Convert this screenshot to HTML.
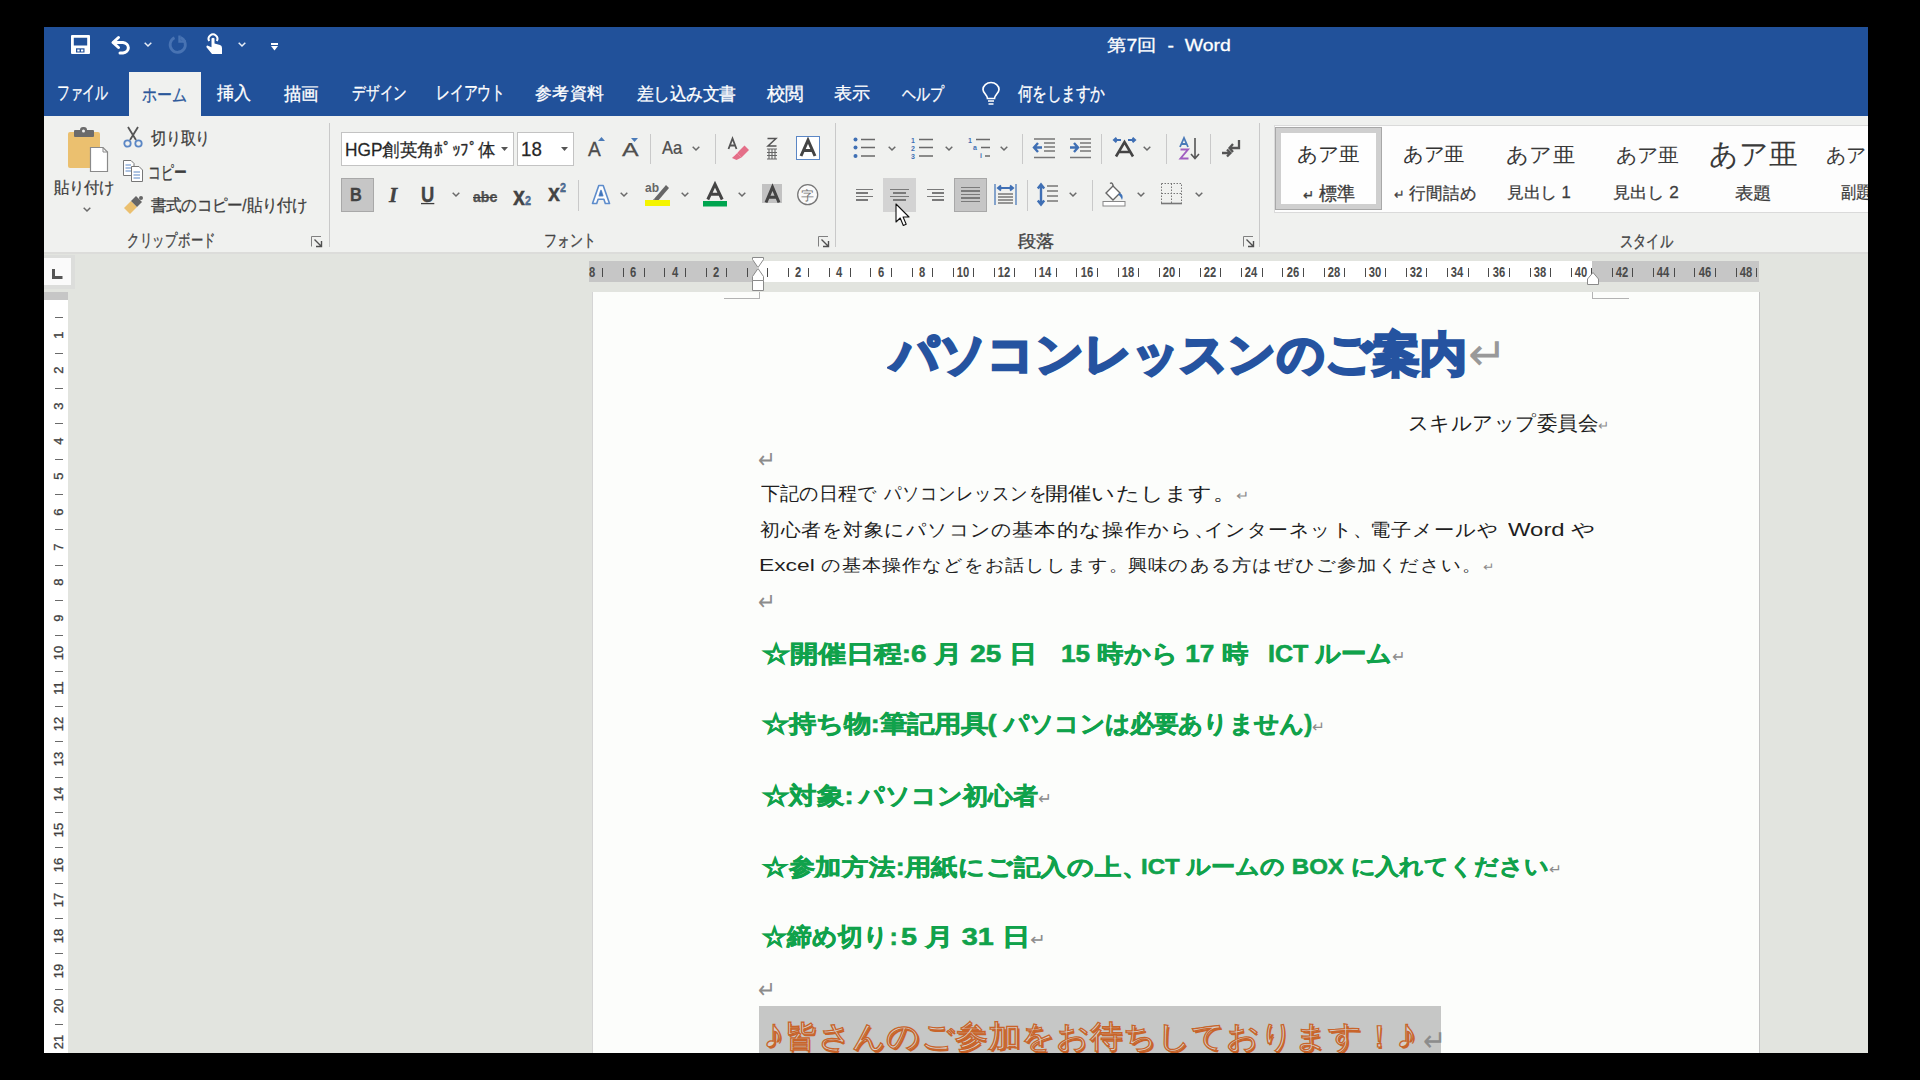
<!DOCTYPE html>
<html><head><meta charset="utf-8"><title>Word</title>
<style>
*{margin:0;padding:0;box-sizing:border-box}
html,body{width:1920px;height:1080px;overflow:hidden;background:#000;font-family:"Liberation Sans",sans-serif;position:relative}
.a{position:absolute}
svg{position:absolute;overflow:visible}
.t{position:absolute;white-space:nowrap;transform-origin:0 0;line-height:1.25}
.sep{position:absolute;width:1px;background:#c9c9c9}
.chev{position:absolute;width:5px;height:5px;border-right:1.5px solid #6a6a6a;border-bottom:1.5px solid #6a6a6a;transform:rotate(45deg)}
.rl{position:absolute;top:265px;font-size:14px;font-weight:bold;color:#4a4a4a;line-height:14px;width:24px;text-align:center;margin-left:-12px;transform:scaleX(0.8)}
.tk{position:absolute;top:268px;width:1px;height:9px;background:#4a4a4a}
.vl{position:absolute;left:47px;font-size:13px;color:#404040;-webkit-text-stroke:0.3px #404040;line-height:14px;width:24px;height:14px;text-align:center;transform:rotate(-90deg)}
.vt{position:absolute;left:55px;width:8px;height:1px;background:#6a6a6a}
.tab{color:#fff;font-size:17px;-webkit-text-stroke:0.3px #fff}
.rt{color:#3d3d3d;font-size:15px;-webkit-text-stroke:0.25px #3d3d3d}
.gl{color:#444;font-size:15px;-webkit-text-stroke:0.3px #444}
.body{font-size:20.6px;color:#1e1e1e}
.grn{font-size:26px;color:#10a24b;font-weight:bold;-webkit-text-stroke:0.6px #10a24b}
.ret{color:#8c8c8c;font-weight:normal;-webkit-text-stroke:0}
.sty{font-family:"Liberation Serif",serif;color:#333}
.line{position:absolute;height:1.6px;background:#7a7a7a}
</style></head><body>
<div class="a" style="left:44px;top:27px;width:1824px;height:1026px;background:#e2e4df;"></div>
<div class="a" style="left:44px;top:27px;width:1824px;height:89px;background:#21519a;"></div>
<svg style="left:71px;top:35px" width="19" height="19" viewBox="0 0 19 19"><path d="M0 1Q0 0 1 0H18Q19 0 19 1V18Q19 19 18 19H1Q0 19 0 18Z M2.8 2.8V10.5H16.2V2.8Z" fill="#fff" fill-rule="evenodd"/><rect x="5" y="13.3" width="8.5" height="4.2" fill="#21519a"/><rect x="6.3" y="14.5" width="2.3" height="2" fill="#fff"/><rect x="10" y="14.5" width="2.3" height="2" fill="#fff"/></svg>
<svg style="left:111px;top:36px" width="22" height="18" viewBox="0 0 22 18"><path d="M7.5 1.5L2 6.5L7.5 11.5" fill="none" stroke="#fff" stroke-width="3" stroke-linejoin="round" stroke-linecap="round"/><path d="M3 6.5H12A6.2 5.3 0 0 1 12 17H9" fill="none" stroke="#fff" stroke-width="3" stroke-linecap="round"/></svg>
<svg style="left:144px;top:42px" width="8" height="5" viewBox="0 0 8 5"><path d="M0.7 0.7L4 4L7.3 0.7" fill="none" stroke="#e8eef7" stroke-width="1.5"/></svg>
<svg style="left:169px;top:35px" width="19" height="19" viewBox="0 0 19 19"><path d="M11.5 2.6A7.6 7.6 0 1 1 5.5 2.8" fill="none" stroke="#4873b3" stroke-width="2.8"/><path d="M10.5 0.5V6.5H17" fill="none" stroke="#4873b3" stroke-width="2.4"/></svg>
<svg style="left:206px;top:34px" width="17" height="20" viewBox="0 0 17 20"><path d="M3.2 7A4.4 4.4 0 1 1 10.8 7" fill="none" stroke="#fff" stroke-width="2"/><path d="M5.5 4.6Q7 3 8.5 4.6V9.5L14 11Q16 11.6 16 14V20H6L0.5 13.2Q0 12 1.4 11.6L5.5 13.3Z" fill="#fff"/></svg>
<svg style="left:238px;top:42px" width="8" height="5" viewBox="0 0 8 5"><path d="M0.7 0.7L4 4L7.3 0.7" fill="none" stroke="#e8eef7" stroke-width="1.5"/></svg>
<div class="a" style="left:271px;top:43px;width:7px;height:2px;background:#fff;"></div>
<svg style="left:271px;top:46px" width="7" height="5" viewBox="0 0 7 5"><path d="M0 0H7L3.5 4.5Z" fill="#fff"/></svg>
<div class="a" style="left:129px;top:72px;width:72px;height:44px;background:#f0f1ef;"></div>
<svg style="left:982px;top:82px" width="18" height="24" viewBox="0 0 18 24"><path d="M5.5 16.5C5.5 13 1 11 1 7.5A8 7 0 0 1 17 7.5C17 11 12.5 13 12.5 16.5Z" fill="none" stroke="#fff" stroke-width="1.7"/><path d="M6 19H12M6.5 22H11.5" stroke="#fff" stroke-width="1.7"/></svg>
<div class="a" style="left:44px;top:116px;width:1824px;height:137px;background:#f0f1ef;"></div>
<div class="a" style="left:44px;top:252px;width:1824px;height:2px;background:#dcdcda;"></div>
<div class="sep" style="left:329px;top:123px;height:124px"></div>
<div class="sep" style="left:835px;top:123px;height:124px"></div>
<div class="sep" style="left:1259px;top:123px;height:124px"></div>
<svg style="left:311px;top:236px" width="12" height="11" viewBox="0 0 12 11"><path d="M0.5 10.5V0.5H10" fill="none" stroke="#808080" stroke-width="1"/><path d="M3.5 3.5L10 10M10.5 5V10.5H5" fill="none" stroke="#505050" stroke-width="1.4"/></svg>
<svg style="left:818px;top:236px" width="12" height="11" viewBox="0 0 12 11"><path d="M0.5 10.5V0.5H10" fill="none" stroke="#808080" stroke-width="1"/><path d="M3.5 3.5L10 10M10.5 5V10.5H5" fill="none" stroke="#505050" stroke-width="1.4"/></svg>
<svg style="left:1243px;top:236px" width="12" height="11" viewBox="0 0 12 11"><path d="M0.5 10.5V0.5H10" fill="none" stroke="#808080" stroke-width="1"/><path d="M3.5 3.5L10 10M10.5 5V10.5H5" fill="none" stroke="#505050" stroke-width="1.4"/></svg>
<svg style="left:67px;top:126px" width="42" height="47" viewBox="0 0 42 47"><rect x="1" y="6" width="32" height="36" rx="2" fill="#ebc06f"/><rect x="7" y="4" width="20" height="7" rx="1" fill="#6b6b6b"/><rect x="13" y="1" width="7" height="6" rx="3" fill="#6b6b6b"/><circle cx="16.5" cy="5" r="1.5" fill="#f1f1f0"/><path d="M23.5 21.5H36L40.5 26V45.5H23.5Z" fill="#fff" stroke="#8a8a8a" stroke-width="1.2"/><path d="M36 21.5V26H40.5" fill="none" stroke="#8a8a8a" stroke-width="1"/></svg>
<svg style="left:83px;top:207px" width="8" height="5" viewBox="0 0 8 5"><path d="M0.7 0.7L4 4L7.3 0.7" fill="none" stroke="#6a6a6a" stroke-width="1.5"/></svg>
<svg style="left:123px;top:126px" width="20" height="22" viewBox="0 0 20 22"><path d="M5 1L13 14M15 1L7 14" stroke="#555" stroke-width="1.8"/><circle cx="4.5" cy="17.5" r="3.2" fill="none" stroke="#5b87c5" stroke-width="1.8"/><circle cx="15.5" cy="17.5" r="3.2" fill="none" stroke="#5b87c5" stroke-width="1.8"/></svg>
<svg style="left:123px;top:160px" width="21" height="22" viewBox="0 0 21 22"><path d="M0.5 0.5H8L11 3.5V15.5H0.5Z" fill="#fff" stroke="#777"/><path d="M2.5 5H8M2.5 8H8M2.5 11H8" stroke="#5b87c5"/><path d="M8.5 6.5H16L19.5 10V21.5H8.5Z" fill="#fff" stroke="#777"/><path d="M10.5 12H17M10.5 15H17M10.5 18H17" stroke="#5b87c5"/></svg>
<svg style="left:123px;top:196px" width="21" height="19" viewBox="0 0 21 19"><path d="M1 12L8 5L14 11L7 18Z" fill="#ebc06f"/><path d="M8 5L13 0L19 6L14 11Z" fill="#666"/><circle cx="18" cy="2" r="2" fill="#666"/></svg>
<div class="a" style="left:341px;top:132px;width:173px;height:34px;background:#fff;border:1px solid #c3c3c3"></div>
<svg style="left:501px;top:147px" width="7" height="4" viewBox="0 0 7 4"><path d="M0 0H7L3.5 4Z" fill="#555"/></svg>
<div class="a" style="left:517px;top:132px;width:57px;height:34px;background:#fff;border:1px solid #c3c3c3"></div>
<svg style="left:561px;top:147px" width="7" height="4" viewBox="0 0 7 4"><path d="M0 0H7L3.5 4Z" fill="#555"/></svg>
<svg style="left:598px;top:137px" width="7" height="4" viewBox="0 0 7 4"><path d="M0 4H7L3.5 0Z" fill="#4a7ab8"/></svg>
<svg style="left:631px;top:138px" width="7" height="4" viewBox="0 0 7 4"><path d="M0 0H7L3.5 4Z" fill="#4a7ab8"/></svg>
<div class="sep" style="left:650px;top:134px;height:30px"></div>
<svg style="left:692px;top:146px" width="8" height="5" viewBox="0 0 8 5"><path d="M0.7 0.7L4 4L7.3 0.7" fill="none" stroke="#6a6a6a" stroke-width="1.5"/></svg>
<div class="sep" style="left:715px;top:134px;height:30px"></div>
<svg style="left:728px;top:137px" width="22" height="24" viewBox="0 0 22 24"><path d="M0.5 12L4.5 1.5L8.5 12M2 8.5H7" fill="none" stroke="#555" stroke-width="1.8"/><path d="M9 16L16.5 8.5L21 13L13.5 20.5Z" fill="#e46f88"/><path d="M4 21L9 16L13.5 20.5L8.5 23Z" fill="#e46f88"/><path d="M5.5 19.5L10.5 14.5" stroke="#f8c9d3" stroke-width="1"/></svg>
<svg style="left:766px;top:137px" width="12" height="23" viewBox="0 0 12 23"><path d="M1.5 1.5H10L2 9H10.5" fill="none" stroke="#555" stroke-width="1.5"/><path d="M1 12H11M1 22H11M3 12V22M6 12V22M9 12V22M1 15.5H11M1 18.5H11" stroke="#666" stroke-width="1.1"/></svg>
<div class="a" style="left:796px;top:136px;width:24px;height:24px;background:#fff;border:1px solid #5b87c5"></div>
<svg style="left:800px;top:139px" width="16" height="18" viewBox="0 0 16 18"><path d="M1 17L8 1.2L15 17M3.8 11.5H12.2" fill="none" stroke="#444" stroke-width="3"/></svg>
<div class="a" style="left:341px;top:178px;width:33px;height:34px;background:#c6c6c6;border:1px solid #a8a8a8"></div>
<svg style="left:452px;top:192px" width="8" height="5" viewBox="0 0 8 5"><path d="M0.7 0.7L4 4L7.3 0.7" fill="none" stroke="#6a6a6a" stroke-width="1.5"/></svg>
<div class="sep" style="left:578px;top:180px;height:31px"></div>
<svg style="left:591px;top:184px" width="20" height="21" viewBox="0 0 20 21"><path d="M1.5 19.5L7.8 1.5H12.2L18.5 19.5H14.3L12.9 15.3H7.1L5.7 19.5Z M8.3 11.8H11.7L10 6.5Z" fill="#fdfdfd" fill-rule="evenodd" stroke="#5d8ccb" stroke-width="1.6" stroke-linejoin="round"/><path d="M8.3 11.8H11.7L10 6.5Z" fill="#3f73b9"/></svg>
<svg style="left:620px;top:192px" width="8" height="5" viewBox="0 0 8 5"><path d="M0.7 0.7L4 4L7.3 0.7" fill="none" stroke="#6a6a6a" stroke-width="1.5"/></svg>
<svg style="left:644px;top:182px" width="27" height="25" viewBox="0 0 27 25"><text x="1" y="10" font-size="12" font-family="Liberation Sans" font-weight="bold" fill="#666">ab</text><path d="M10 17L22 3L25 6L13 20Z" fill="#666"/><path d="M8 19L10 17L13 20L11 21Z" fill="#555"/><rect x="1" y="18" width="25" height="6" fill="#f4f400"/></svg>
<svg style="left:681px;top:192px" width="8" height="5" viewBox="0 0 8 5"><path d="M0.7 0.7L4 4L7.3 0.7" fill="none" stroke="#6a6a6a" stroke-width="1.5"/></svg>
<svg style="left:703px;top:183px" width="25" height="24" viewBox="0 0 25 24"><path d="M4.8 16.5L12 1.2L19.2 16.5M7.5 11.3H16.5" fill="none" stroke="#444" stroke-width="3"/><rect x="0" y="18" width="24" height="5.5" fill="#00a54f"/></svg>
<svg style="left:738px;top:192px" width="8" height="5" viewBox="0 0 8 5"><path d="M0.7 0.7L4 4L7.3 0.7" fill="none" stroke="#6a6a6a" stroke-width="1.5"/></svg>
<div class="a" style="left:762px;top:184px;width:20px;height:19px;background:#c2c2c2;"></div>
<svg style="left:765px;top:186px" width="15" height="17" viewBox="0 0 15 17"><path d="M1 16.5L7.5 1.2L14 16.5M3.5 11.3H11.5" fill="none" stroke="#444" stroke-width="3"/></svg>
<svg style="left:797px;top:184px" width="22" height="22" viewBox="0 0 22 22"><circle cx="10.7" cy="10.7" r="10" fill="#fafafa" stroke="#777" stroke-width="1.3"/><text x="10.7" y="16" font-size="13" text-anchor="middle" font-family="Liberation Sans" fill="#777">字</text></svg>
<svg style="left:853px;top:137px" width="23" height="22" viewBox="0 0 23 22"><circle cx="2.5" cy="2.5" r="2" fill="#3f6fb4"/><circle cx="2.5" cy="10.5" r="2" fill="#3f6fb4"/><circle cx="2.5" cy="19" r="2" fill="#3f6fb4"/><path d="M8 2.5H22M8 10.5H22M8 19H22" stroke="#6a6a6a" stroke-width="1.6"/></svg>
<svg style="left:888px;top:146px" width="8" height="5" viewBox="0 0 8 5"><path d="M0.7 0.7L4 4L7.3 0.7" fill="none" stroke="#6a6a6a" stroke-width="1.5"/></svg>
<svg style="left:911px;top:137px" width="23" height="22" viewBox="0 0 23 22"><text x="0" y="6" font-size="7" font-family="Liberation Sans" font-weight="bold" fill="#3f6fb4">1</text><text x="0" y="14" font-size="7" font-family="Liberation Sans" font-weight="bold" fill="#3f6fb4">2</text><text x="0" y="22" font-size="7" font-family="Liberation Sans" font-weight="bold" fill="#3f6fb4">3</text><path d="M8 2.5H22M8 10.5H22M8 19H22" stroke="#6a6a6a" stroke-width="1.6"/></svg>
<svg style="left:945px;top:146px" width="8" height="5" viewBox="0 0 8 5"><path d="M0.7 0.7L4 4L7.3 0.7" fill="none" stroke="#6a6a6a" stroke-width="1.5"/></svg>
<svg style="left:968px;top:137px" width="23" height="22" viewBox="0 0 23 22"><text x="0" y="6" font-size="7" font-family="Liberation Sans" font-weight="bold" fill="#3f6fb4">1</text><text x="5" y="13" font-size="7" font-family="Liberation Sans" font-weight="bold" fill="#3f6fb4">a</text><text x="12" y="21" font-size="7" font-family="Liberation Sans" font-weight="bold" fill="#3f6fb4">i</text><path d="M8 2.5H22M13 10.5H22M17 19H22" stroke="#6a6a6a" stroke-width="1.6"/></svg>
<svg style="left:1000px;top:146px" width="8" height="5" viewBox="0 0 8 5"><path d="M0.7 0.7L4 4L7.3 0.7" fill="none" stroke="#6a6a6a" stroke-width="1.5"/></svg>
<div class="sep" style="left:1022px;top:134px;height:30px"></div>
<svg style="left:1033px;top:138px" width="23" height="21" viewBox="0 0 23 21"><path d="M1 1H22M11 5H22M11 9H22M11 13H22M1 19.5H22" stroke="#777" stroke-width="1.6"/><path d="M1 9.5H9M5 5L1 9.5L5 14" fill="none" stroke="#3f6fb4" stroke-width="2.4"/></svg>
<svg style="left:1069px;top:138px" width="23" height="21" viewBox="0 0 23 21"><path d="M1 1H22M11 5H22M11 9H22M11 13H22M1 19.5H22" stroke="#777" stroke-width="1.6"/><path d="M1 9.5H9M5 5L9 9.5L5 14" fill="none" stroke="#3f6fb4" stroke-width="2.4"/></svg>
<div class="sep" style="left:1101px;top:134px;height:30px"></div>
<svg style="left:1113px;top:137px" width="23" height="20" viewBox="0 0 23 20"><path d="M3 19.5L11.5 5L20 19.5M6 15H17" fill="none" stroke="#444" stroke-width="2.6"/><path d="M1 3H8M3.5 0.8L1 3L3.5 5.2M15 3H22M19.5 0.8L22 3L19.5 5.2" fill="none" stroke="#3f6fb4" stroke-width="2"/></svg>
<svg style="left:1143px;top:146px" width="8" height="5" viewBox="0 0 8 5"><path d="M0.7 0.7L4 4L7.3 0.7" fill="none" stroke="#6a6a6a" stroke-width="1.5"/></svg>
<div class="sep" style="left:1166px;top:134px;height:30px"></div>
<svg style="left:1179px;top:137px" width="21" height="23" viewBox="0 0 21 23"><path d="M1 10L5 1L9 10M2.5 7H7.5" fill="none" stroke="#4a7ab8" stroke-width="1.8"/><path d="M1.5 12.5H9L1.5 21.5H9.5" fill="none" stroke="#a05ec0" stroke-width="1.9"/><path d="M16 1V21M12 17L16 21.5L20 17" fill="none" stroke="#555" stroke-width="1.6"/></svg>
<div class="sep" style="left:1210px;top:134px;height:30px"></div>
<svg style="left:1221px;top:139px" width="20" height="18" viewBox="0 0 20 18"><path d="M18 1V9H9M12 5L8.5 9L12 13" fill="none" stroke="#555" stroke-width="2.3"/><path d="M1 14H9M6 10.5L9.5 14L6 17.5" fill="none" stroke="#555" stroke-width="2.3"/></svg>
<div class="line" style="left:856px;top:188.5px;width:17px;"></div><div class="line" style="left:856px;top:192.1px;width:12px;"></div><div class="line" style="left:856px;top:195.7px;width:17px;"></div><div class="line" style="left:856px;top:199.3px;width:12px;"></div>
<div class="a" style="left:883px;top:178px;width:33px;height:34px;background:#d3d3d3;"></div>
<div class="line" style="left:890px;top:188.5px;width:19px;"></div><div class="line" style="left:893px;top:192.1px;width:13px;"></div><div class="line" style="left:890px;top:195.7px;width:19px;"></div><div class="line" style="left:893px;top:199.3px;width:13px;"></div>
<div class="line" style="left:927px;top:188.5px;width:17px;"></div><div class="line" style="left:932px;top:192.1px;width:12px;"></div><div class="line" style="left:927px;top:195.7px;width:17px;"></div><div class="line" style="left:932px;top:199.3px;width:12px;"></div>
<div class="a" style="left:954px;top:178px;width:33px;height:34px;background:#c6c6c6;border:1px solid #a8a8a8"></div>
<div class="line" style="left:961px;top:186.5px;width:19px;"></div><div class="line" style="left:961px;top:190.1px;width:19px;"></div><div class="line" style="left:961px;top:193.7px;width:19px;"></div><div class="line" style="left:961px;top:197.3px;width:19px;"></div><div class="line" style="left:961px;top:200.9px;width:19px;"></div>
<svg style="left:994px;top:184px" width="23" height="22" viewBox="0 0 23 22"><path d="M1 0V21M22 0V21" stroke="#4a7ab8" stroke-width="1.3"/><path d="M4 4H19M7 1.5L4 4L7 6.5M16 1.5L19 4L16 6.5" fill="none" stroke="#3f6fb4" stroke-width="2"/><path d="M4 10H19M4 13H19M4 16H19M4 19H19" stroke="#777" stroke-width="1.6"/></svg>
<div class="sep" style="left:1027px;top:180px;height:31px"></div>
<svg style="left:1037px;top:183px" width="22" height="23" viewBox="0 0 22 23"><path d="M4 2V21M0.8 5.5L4 1.5L7.2 5.5M0.8 17.5L4 21.5L7.2 17.5" fill="none" stroke="#3f6fb4" stroke-width="2.4"/><path d="M10 3H21M10 8H21M10 13H21M10 18H21" stroke="#777" stroke-width="1.6"/></svg>
<svg style="left:1069px;top:192px" width="8" height="5" viewBox="0 0 8 5"><path d="M0.7 0.7L4 4L7.3 0.7" fill="none" stroke="#6a6a6a" stroke-width="1.5"/></svg>
<div class="sep" style="left:1092px;top:180px;height:31px"></div>
<svg style="left:1102px;top:182px" width="25" height="25" viewBox="0 0 25 25"><path d="M8 1.5Q10 0 11 3V7" fill="none" stroke="#666" stroke-width="1.3"/><path d="M4 11L11 4L18 11L11 18Z" fill="#fff" stroke="#666" stroke-width="1.4"/><path d="M18 11Q22 13 20 18Q18 13 16 13Z" fill="#3f73b9"/><rect x="1" y="19.5" width="22" height="4.5" fill="#fff" stroke="#888" stroke-width="1"/></svg>
<svg style="left:1137px;top:192px" width="8" height="5" viewBox="0 0 8 5"><path d="M0.7 0.7L4 4L7.3 0.7" fill="none" stroke="#6a6a6a" stroke-width="1.5"/></svg>
<svg style="left:1161px;top:183px" width="21" height="22" viewBox="0 0 21 22"><path d="M0.5 0.5H20.5V20M0.5 0.5V20M10.5 0.5V20M0.5 10.5H20.5" fill="none" stroke="#777" stroke-width="1" stroke-dasharray="1.5 1.5"/><path d="M0 20.5H21" stroke="#777" stroke-width="1.6"/></svg>
<svg style="left:1195px;top:192px" width="8" height="5" viewBox="0 0 8 5"><path d="M0.7 0.7L4 4L7.3 0.7" fill="none" stroke="#6a6a6a" stroke-width="1.5"/></svg>
<div class="a" style="left:1274px;top:125px;width:594px;height:88px;background:#fdfdfd;border-top:1px solid #dadada;border-bottom:1px solid #dadada;border-left:1px solid #dadada"></div>
<div class="a" style="left:1275px;top:127px;width:107px;height:83px;background:#cfcfcf;border:1px solid #a8a8a8"></div>
<div class="a" style="left:1281px;top:133px;width:95px;height:71px;background:#fefefe;"></div>
<div class="a" style="left:589px;top:261px;width:1170px;height:21px;background:#fff;"></div>
<div class="a" style="left:589px;top:261px;width:168px;height:21px;background:#c6c6c6;"></div>
<div class="a" style="left:1592px;top:261px;width:167px;height:21px;background:#c6c6c6;"></div>
<div class="tk" style="left:602px"></div>
<div class="tk" style="left:623px"></div>
<div class="tk" style="left:644px"></div>
<div class="tk" style="left:664px"></div>
<div class="tk" style="left:685px"></div>
<div class="tk" style="left:706px"></div>
<div class="tk" style="left:726px"></div>
<div class="tk" style="left:747px"></div>
<div class="tk" style="left:767px"></div>
<div class="tk" style="left:788px"></div>
<div class="tk" style="left:808px"></div>
<div class="tk" style="left:829px"></div>
<div class="tk" style="left:850px"></div>
<div class="tk" style="left:870px"></div>
<div class="tk" style="left:891px"></div>
<div class="tk" style="left:912px"></div>
<div class="tk" style="left:932px"></div>
<div class="tk" style="left:953px"></div>
<div class="tk" style="left:973px"></div>
<div class="tk" style="left:994px"></div>
<div class="tk" style="left:1014px"></div>
<div class="tk" style="left:1035px"></div>
<div class="tk" style="left:1056px"></div>
<div class="tk" style="left:1076px"></div>
<div class="tk" style="left:1097px"></div>
<div class="tk" style="left:1118px"></div>
<div class="tk" style="left:1138px"></div>
<div class="tk" style="left:1159px"></div>
<div class="tk" style="left:1179px"></div>
<div class="tk" style="left:1200px"></div>
<div class="tk" style="left:1220px"></div>
<div class="tk" style="left:1241px"></div>
<div class="tk" style="left:1262px"></div>
<div class="tk" style="left:1282px"></div>
<div class="tk" style="left:1303px"></div>
<div class="tk" style="left:1324px"></div>
<div class="tk" style="left:1344px"></div>
<div class="tk" style="left:1365px"></div>
<div class="tk" style="left:1385px"></div>
<div class="tk" style="left:1406px"></div>
<div class="tk" style="left:1426px"></div>
<div class="tk" style="left:1447px"></div>
<div class="tk" style="left:1468px"></div>
<div class="tk" style="left:1488px"></div>
<div class="tk" style="left:1509px"></div>
<div class="tk" style="left:1530px"></div>
<div class="tk" style="left:1550px"></div>
<div class="tk" style="left:1571px"></div>
<div class="tk" style="left:1591px"></div>
<div class="tk" style="left:1612px"></div>
<div class="tk" style="left:1632px"></div>
<div class="tk" style="left:1653px"></div>
<div class="tk" style="left:1674px"></div>
<div class="tk" style="left:1694px"></div>
<div class="tk" style="left:1715px"></div>
<div class="tk" style="left:1736px"></div>
<div class="tk" style="left:1756px"></div>
<div class="rl" style="left:592.2px">8</div>
<div class="rl" style="left:633.4px">6</div>
<div class="rl" style="left:674.6px">4</div>
<div class="rl" style="left:715.8px">2</div>
<div class="rl" style="left:798.2px">2</div>
<div class="rl" style="left:839.4px">4</div>
<div class="rl" style="left:880.6px">6</div>
<div class="rl" style="left:921.8px">8</div>
<div class="rl" style="left:963.0px">10</div>
<div class="rl" style="left:1004.2px">12</div>
<div class="rl" style="left:1045.4px">14</div>
<div class="rl" style="left:1086.6px">16</div>
<div class="rl" style="left:1127.8px">18</div>
<div class="rl" style="left:1169.0px">20</div>
<div class="rl" style="left:1210.2px">22</div>
<div class="rl" style="left:1251.4px">24</div>
<div class="rl" style="left:1292.6px">26</div>
<div class="rl" style="left:1333.8px">28</div>
<div class="rl" style="left:1375.0px">30</div>
<div class="rl" style="left:1416.2px">32</div>
<div class="rl" style="left:1457.4px">34</div>
<div class="rl" style="left:1498.6px">36</div>
<div class="rl" style="left:1539.8px">38</div>
<div class="rl" style="left:1581.0px">40</div>
<div class="rl" style="left:1622.2px">42</div>
<div class="rl" style="left:1663.4px">44</div>
<div class="rl" style="left:1704.6px">46</div>
<div class="rl" style="left:1745.8px">48</div>
<svg style="left:752px;top:257px" width="12" height="35" viewBox="0 0 12 35"><path d="M0.5 0.5H11.5V2.5L6 10.5L0.5 2.5Z" fill="#fff" stroke="#8a8a8a"/><path d="M6 11.5L11.5 19.5V23.5H0.5V19.5Z" fill="#fff" stroke="#8a8a8a"/><path d="M0.5 23.5H11.5V33.5H0.5Z" fill="#fff" stroke="#8a8a8a"/></svg>
<svg style="left:1587px;top:272px" width="12" height="13" viewBox="0 0 12 13"><path d="M6 0.5L11.5 7V12.5H0.5V7Z" fill="#fff" stroke="#8a8a8a"/></svg>
<div class="a" style="left:44px;top:255px;width:31px;height:34px;background:#dcdddb;"></div>
<div class="a" style="left:44px;top:258px;width:27px;height:27px;background:#fafafa;"></div>
<svg style="left:52px;top:269px" width="11" height="10" viewBox="0 0 11 10"><path d="M1.5 0V8.5H10.5" fill="none" stroke="#555" stroke-width="3"/></svg>
<div class="a" style="left:44px;top:292px;width:24px;height:8px;background:#c6c6c6;"></div>
<div class="a" style="left:44px;top:300px;width:24px;height:753px;background:#fff;"></div>
<div class="vl" style="top:328.0px">1</div>
<div class="vt" style="top:317.3px"></div>
<div class="vl" style="top:363.3px">2</div>
<div class="vt" style="top:352.7px"></div>
<div class="vl" style="top:398.7px">3</div>
<div class="vt" style="top:388.0px"></div>
<div class="vl" style="top:434.0px">4</div>
<div class="vt" style="top:423.3px"></div>
<div class="vl" style="top:469.3px">5</div>
<div class="vt" style="top:458.6px"></div>
<div class="vl" style="top:504.6px">6</div>
<div class="vt" style="top:494.0px"></div>
<div class="vl" style="top:540.0px">7</div>
<div class="vt" style="top:529.3px"></div>
<div class="vl" style="top:575.3px">8</div>
<div class="vt" style="top:564.6px"></div>
<div class="vl" style="top:610.6px">9</div>
<div class="vt" style="top:600.0px"></div>
<div class="vl" style="top:646.0px">10</div>
<div class="vt" style="top:635.3px"></div>
<div class="vl" style="top:681.3px">11</div>
<div class="vt" style="top:670.6px"></div>
<div class="vl" style="top:716.6px">12</div>
<div class="vt" style="top:706.0px"></div>
<div class="vl" style="top:752.0px">13</div>
<div class="vt" style="top:741.3px"></div>
<div class="vl" style="top:787.3px">14</div>
<div class="vt" style="top:776.6px"></div>
<div class="vl" style="top:822.6px">15</div>
<div class="vt" style="top:812.0px"></div>
<div class="vl" style="top:857.9px">16</div>
<div class="vt" style="top:847.3px"></div>
<div class="vl" style="top:893.3px">17</div>
<div class="vt" style="top:882.6px"></div>
<div class="vl" style="top:928.6px">18</div>
<div class="vt" style="top:917.9px"></div>
<div class="vl" style="top:963.9px">19</div>
<div class="vt" style="top:953.3px"></div>
<div class="vl" style="top:999.3px">20</div>
<div class="vt" style="top:988.6px"></div>
<div class="vl" style="top:1034.6px">21</div>
<div class="vt" style="top:1023.9px"></div>
<div class="a" style="left:592px;top:292px;width:1168px;height:761px;background:#fcfdfb;border-left:1px solid #d5d5d5;border-right:1px solid #c5c5c5"></div>
<div class="a" style="left:724px;top:298px;width:36px;height:1px;background:#b3b3b3;"></div>
<div class="a" style="left:759px;top:292px;width:1px;height:7px;background:#b3b3b3;"></div>
<div class="a" style="left:1592px;top:298px;width:37px;height:1px;background:#b3b3b3;"></div>
<div class="a" style="left:1592px;top:292px;width:1px;height:7px;background:#b3b3b3;"></div>
<div class="a" style="left:759px;top:1006px;width:682px;height:47px;background:#c6c7c6;"></div>
<div id="ttl" class="t tab" style="left:1106.91px;top:35.10px;transform:scale(1.0797,0.9481);font-size:18px">第7回&nbsp; - &nbsp;Word</div>
<div id="tb1" class="t tab" style="left:57.38px;top:81.97px;transform:scale(0.7411,1.0918);">ファイル</div>
<div id="tb2" class="t tab" style="left:142.25px;top:83.86px;transform:scale(0.8779,1.0544);color:#2b579a;-webkit-text-stroke-color:#2b579a">ホーム</div>
<div id="tb3" class="t tab" style="left:217.22px;top:82.35px;transform:scale(1.0220,1.0788);">挿入</div>
<div id="tb4" class="t tab" style="left:284.42px;top:82.60px;transform:scale(1.0161,1.0444);">描画</div>
<div id="tb5" class="t tab" style="left:351.77px;top:81.79px;transform:scale(0.8099,1.0704);">デザイン</div>
<div id="tb6" class="t tab" style="left:436.38px;top:81.42px;transform:scale(0.8110,1.1064);">レイアウト</div>
<div id="tb7" class="t tab" style="left:534.55px;top:83.12px;transform:scale(1.0198,1.0255);">参考資料</div>
<div id="tb8" class="t tab" style="left:636.50px;top:82.90px;transform:scale(0.9664,1.0370);">差し込み文書</div>
<div id="tb9" class="t tab" style="left:767.00px;top:83.05px;transform:scale(1.0639,1.0322);">校閲</div>
<div id="tb10" class="t tab" style="left:834.13px;top:82.90px;transform:scale(1.0562,0.9945);">表示</div>
<div id="tb11" class="t tab" style="left:901.68px;top:82.88px;transform:scale(0.8256,1.0625);">ヘルプ</div>
<div id="tb12" class="t tab" style="left:1018.00px;top:81.64px;transform:scale(0.8483,1.0964);">何をしますか</div>
<div id="cb1" class="t rt" style="left:54.00px;top:177.59px;transform:scale(1.0073,1.0458);">貼り付け</div>
<div id="cb2" class="t rt" style="left:150.80px;top:127.88px;transform:scale(0.9849,1.1099);">切り取り</div>
<div id="cb3" class="t rt" style="left:148.48px;top:160.64px;transform:scale(0.8788,1.2963);">コピー</div>
<div id="cb4" class="t rt" style="left:150.99px;top:195.62px;transform:scale(1.0147,1.1044);">書式のコピー/貼り付け</div>
<div id="gl1" class="t gl" style="left:127.25px;top:230.21px;transform:scale(0.8484,1.1665);">クリップボード</div>
<div id="gl2" class="t gl" style="left:544.10px;top:230.18px;transform:scale(0.8754,1.1474);">フォント</div>
<div id="gl3" class="t gl" style="left:1017.88px;top:230.67px;transform:scale(1.2023,1.1154);">段落</div>
<div id="gl4" class="t gl" style="left:1620.08px;top:230.72px;transform:scale(0.8807,1.1286);">スタイル</div>
<div id="fn" class="t rt" style="left:344.68px;top:139.39px;transform:scale(1.0807,1.1179);color:#222;font-size:16px">HGP創英角ﾎﾟｯﾌﾟ体</div>
<div id="fs" class="t rt" style="left:521.11px;top:138.02px;transform:scale(1.1670,1.2272);color:#222;font-size:16px">18</div>
<div id="ag" class="t rt" style="left:588.00px;top:136.62px;transform:scale(1.0097,1.0769);font-size:19px;color:#505050">A</div>
<div id="as" class="t rt" style="left:621.66px;top:137.88px;transform:scale(1.3103,1.0003);font-size:19px;color:#505050">A</div>
<div id="aa" class="t rt" style="left:662.45px;top:137.00px;transform:scale(0.8696,0.9594);font-size:19px;color:#505050">Aa</div>
<div id="bb" class="t rt" style="left:350.40px;top:184.12px;transform:scale(0.9635,1.0619);font-size:17px;font-weight:bold;color:#444">B</div>
<div id="ii" class="t rt" style="left:388.73px;top:181.51px;transform:scale(1.1852,1.1959);font-size:18px;font-family:Liberation Serif;font-style:italic;font-weight:bold;color:#444">I</div>
<div id="uu" class="t rt" style="left:421.00px;top:181.07px;transform:scale(1.0833,1.2905);font-size:17px;font-weight:bold;color:#444"><u>U</u></div>
<div id="abc" class="t rt" style="left:473.48px;top:188.00px;transform:scale(0.9356,1.0000);font-size:15px;font-weight:bold;color:#555"><s>abc</s></div>
<div id="xsub" class="t rt" style="left:512.76px;top:180.90px;transform:scale(1.2000,1.4187);font-size:18px;font-weight:bold;color:#444">x<span style="font-size:9px;color:#4a7ab8">2</span></div>
<div id="xsup" class="t rt" style="left:548.00px;top:179.48px;transform:scale(1.2000,1.3206);font-size:18px;font-weight:bold;color:#444">x<sup style="font-size:9px;color:#4a7ab8">2</sup></div>
<div id="s1a" class="t sty" style="left:1297.23px;top:141.80px;transform:scale(1.0425,1.0116);font-size:20px">あア亜</div>
<div id="s1b" class="t rt" style="left:1302.81px;top:181.54px;transform:scale(1.1929,1.2562);"><span style="font-size:11px">↵</span> 標準</div>
<div id="s2a" class="t sty" style="left:1403.24px;top:141.80px;transform:scale(1.0326,1.0116);font-size:20px">あア亜</div>
<div id="s2b" class="t rt" style="left:1393.99px;top:182.65px;transform:scale(1.1283,1.1662);"><span style="font-size:11px">↵</span> 行間詰め</div>
<div id="s3a" class="t sty" style="left:1505.94px;top:141.80px;transform:scale(1.0640,1.0000);font-size:21px;color:#3a3a3a">あア亜</div>
<div id="s3b" class="t rt" style="left:1506.89px;top:182.94px;transform:scale(1.1077,1.0461);">見出し 1</div>
<div id="s4a" class="t sty" style="left:1615.54px;top:142.60px;transform:scale(1.0452,1.0000);font-size:20px;color:#3a3a3a">あア亜</div>
<div id="s4b" class="t rt" style="left:1612.86px;top:182.91px;transform:scale(1.1429,1.0593);">見出し 2</div>
<div id="s5a" class="t sty" style="left:1708.93px;top:136.26px;transform:scale(1.0315,1.0412);font-size:28px;color:#3a3a3a">あア亜</div>
<div id="s5b" class="t rt" style="left:1734.88px;top:182.79px;transform:scale(1.2293,1.1344);">表題</div>
<div id="d_t" class="t t" style="left:890.96px;top:325.99px;transform:scale(0.9839,0.9657);font-size:48px;font-weight:bold;color:#2553a0;-webkit-text-stroke:3.2px #2553a0">パソコンレッスンのご案内<span class="ret" style="-webkit-text-stroke:0;font-weight:normal;color:#999">↵</span></div>
<div id="d_s" class="t body" style="left:1408.05px;top:411.20px;transform:scale(0.9752,0.9510);">スキルアップ委員会<span class="ret" style="font-size:14px">↵</span></div>
<div id="d_r1" class="t body ret" style="left:758.42px;top:446.14px;transform:scale(1.5089,1.7143);font-size:14px">↵</div>
<div id="l1a" class="t body" style="left:761.01px;top:482.20px;transform:scale(0.9020,0.8998);">下記の日程で</div>
<div id="l1b" class="t body" style="left:883.74px;top:482.20px;transform:scale(0.8211,0.8998);">パソコンレッスンを</div>
<div id="l1c" class="t body" style="left:1044.85px;top:482.20px;transform:scale(1.1021,0.8998);">開催いたします。<span class="ret" style="font-size:14px">↵</span></div>
<div id="l2a" class="t body" style="left:760.03px;top:517.92px;transform:scale(0.9767,0.8879);">初心者を対象にパソコンの</div>
<div id="l2b" class="t body" style="left:1011.53px;top:517.92px;transform:scale(1.0630,0.8879);">基本的な操作から、</div>
<div id="l2c" class="t body" style="left:1204.05px;top:517.92px;transform:scale(0.9765,0.8879);">インターネット、</div>
<div id="l2d" class="t body" style="left:1370.00px;top:517.92px;transform:scale(0.9997,0.8879);">電子メールや</div>
<div id="l2e" class="t body" style="left:1508.00px;top:517.92px;transform:scale(1.1602,0.8879);">Word や</div>
<div id="l3a" class="t body" style="left:759.03px;top:554.33px;transform:scale(1.1066,0.8438);">Excel</div>
<div id="l3b" class="t body" style="left:820.81px;top:554.33px;transform:scale(0.9509,0.8438);">の基本操作などをお話しします。</div>
<div id="l3c" class="t body" style="left:1128.00px;top:554.33px;transform:scale(0.9637,0.8438);">興味のある方はぜひご参加ください。<span class="ret" style="font-size:14px">↵</span></div>
<div id="d_r2" class="t body ret" style="left:758.42px;top:588.14px;transform:scale(1.5089,1.7143);font-size:14px">↵</div>
<div id="g1a" class="t grn" style="left:762.00px;top:638.62px;transform:scale(1.0754,0.9147);">☆開催日程:6 月 25 日</div>
<div id="g1b" class="t grn" style="left:1061.39px;top:638.83px;transform:scale(1.0066,0.9169);">15 時から 17 時</div>
<div id="g1c" class="t grn" style="left:1267.53px;top:637.80px;transform:scale(0.9627,0.9524);">ICT ルーム<span class="ret" style="font-size:17px">↵</span></div>
<div id="g2a" class="t grn" style="left:762.00px;top:709.48px;transform:scale(1.0363,0.9084);">☆持ち物:筆記用具(</div>
<div id="g2b" class="t grn" style="left:1004.13px;top:709.48px;transform:scale(0.9322,0.9084);">パソコンは必要ありません)<span class="ret" style="font-size:17px">↵</span></div>
<div id="g3a" class="t grn" style="left:762.00px;top:780.81px;transform:scale(1.0570,0.9246);">☆対象:</div>
<div id="g3b" class="t grn" style="left:858.98px;top:780.81px;transform:scale(0.9633,0.9246);">パソコン初心者<span class="ret" style="font-size:17px">↵</span></div>
<div id="g4a" class="t grn" style="left:762.00px;top:852.01px;transform:scale(1.0288,0.9007);">☆参加方法:用紙にご記入の上、</div>
<div id="g4b" class="t grn" style="left:1141.12px;top:852.77px;transform:scale(0.9235,0.8405);">ICT ルームの BOX に入れてください<span class="ret" style="font-size:17px">↵</span></div>
<div id="g5a" class="t grn" style="left:762.00px;top:922.16px;transform:scale(0.9652,0.9342);">☆締め切り:</div>
<div id="g5b" class="t grn" style="left:900.94px;top:922.16px;transform:scale(1.1062,0.9342);">5 月 31 日<span class="ret" style="font-size:17px">↵</span></div>
<div id="d_r3" class="t body ret" style="left:758.42px;top:976.14px;transform:scale(1.5089,1.7143);font-size:14px">↵</div>
<div id="d_b" class="t t" style="left:762.55px;top:1008.37px;transform:scale(0.9780,0.9163);font-size:34px;color:#d6cfc9;-webkit-text-stroke:1.3px #c8642a;text-shadow:1.6px 1.6px 0 #c8642a"><span style="font-size:1.3em">♪</span>皆さんのご参加をお待ちしております！<span style="font-size:1.3em">♪</span></div>
<div id="d_r4" class="t body ret" style="left:1422.75px;top:1022.02px;transform:scale(1.4040,1.5236);font-size:20px">↵</div>
<div id="s6a" class="t sty" style="left:1826px;top:143px;transform:scale(1.0,1.0);font-size:20px;color:#3a3a3a">あア</div>
<div id="s6b" class="t rt" style="left:1841px;top:182px;transform:scale(1.0,1.12);">副題</div>
<div class="a" style="left:1868px;top:0;width:52px;height:1080px;background:#000"></div>
<div class="a" style="left:0;top:1053px;width:1920px;height:27px;background:#000"></div>
<svg style="left:895px;top:203px" width="16" height="25" viewBox="0 0 16 25"><path d="M1 1V19L5.2 15L8.3 22.5L11.2 21.3L8.1 14H14Z" fill="#fff" stroke="#111" stroke-width="1.1" stroke-linejoin="round"/></svg>
</body></html>
